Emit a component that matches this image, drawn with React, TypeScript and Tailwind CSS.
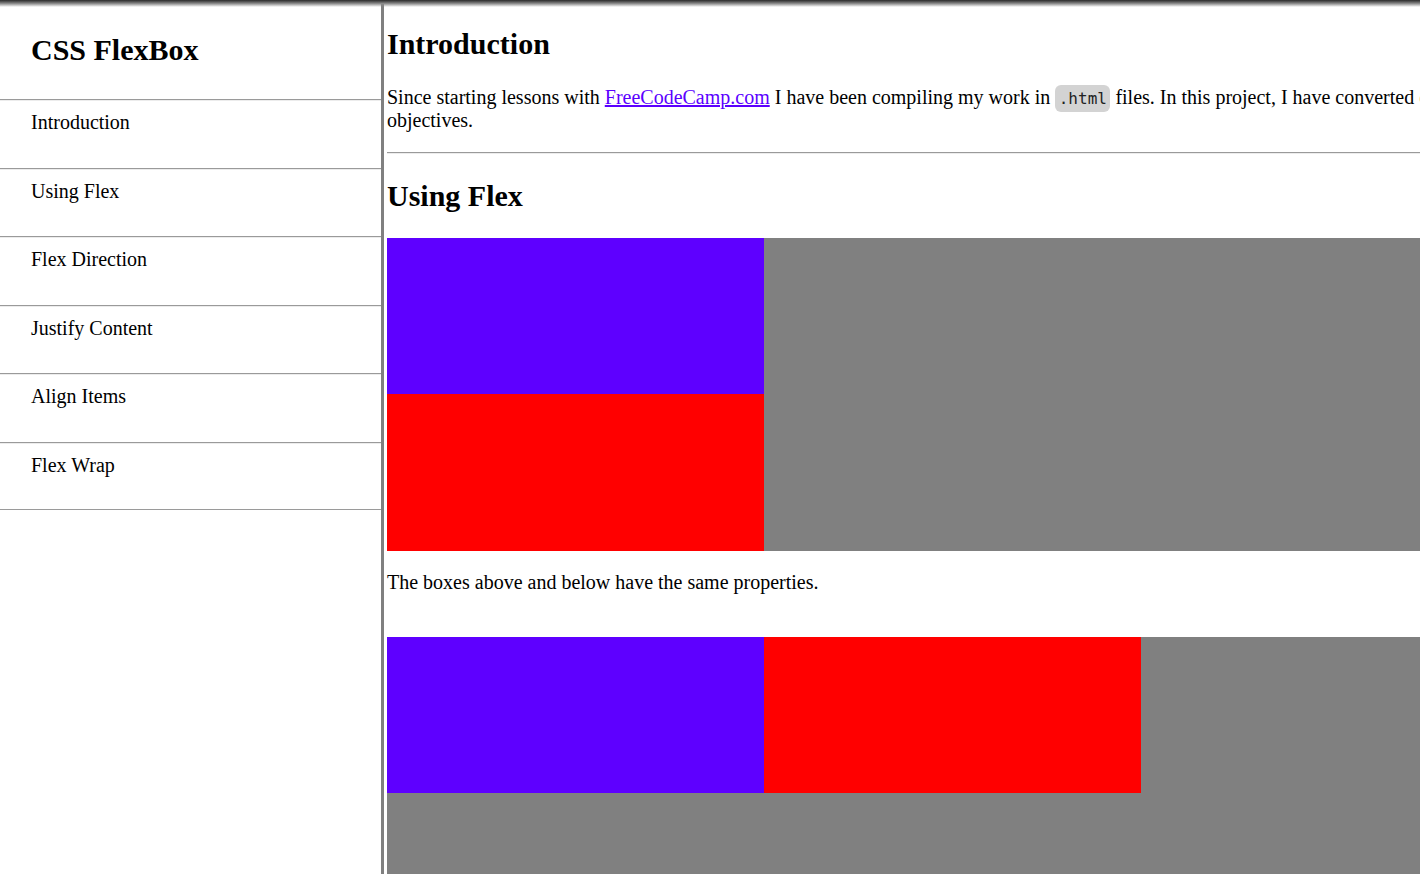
import React from 'react'

const NAV = ['Introduction', 'Using Flex', 'Flex Direction', 'Justify Content', 'Align Items', 'Flex Wrap']

export default function App() {
  return (
    <div
      className="relative flex h-[874px] w-[1420px] overflow-hidden bg-white text-black"
      style={{ fontFamily: '"Liberation Serif", "Times New Roman", serif' }}
    >
      {/* ── Sidebar ── */}
      <nav className="h-full w-[384px] shrink-0 border-r-[3px] border-[#808080]">
        <h1 className="h-[99px] pl-[31px] pt-[33px] text-[30px] font-bold leading-[34px]">CSS FlexBox</h1>
        {NAV.map((item, i) => (
          <a
            key={item}
            href={`#${item.toLowerCase().replace(' ', '-')}`}
            className={`block h-[68.5px] border-t border-[#9a9a9a] pl-[31px] pt-[11px] text-[20px] leading-[23px] text-black no-underline shadow-[inset_0_1px_0_#ececec] ${i === NAV.length - 1 ? 'border-b' : ''}`}
          >
            {item}
          </a>
        ))}
      </nav>

      {/* ── Main ── */}
      <main className="w-[1200px] shrink-0 pl-[3px]">
        <section id="introduction">
          <h2 className="mt-[27px] text-[30px] font-bold leading-[34.5px]">Introduction</h2>
          <p className="mt-[24px] text-[20px] leading-[23px]">
            Since starting lessons with{' '}
            <a href="#" className="text-[#5b00ff] underline">FreeCodeCamp.com</a>{' '}
            I have been compiling my work in{' '}
            <code
              className="rounded-[6px] bg-[#d3d3d3] px-[3.5px] py-[4px] text-[16px] leading-[16px] text-[#222]"
              style={{ fontFamily: '"DejaVu Sans Mono", monospace' }}
            >
              .html
            </code>{' '}
            files. In this project, I have converted one
            <br />
            objectives.
          </p>
          <hr className="mt-[20px] border-t border-b border-t-[#9a9a9a] border-b-[#ececec]" />
        </section>

        <section id="using-flex">
          <h2 className="mt-[25px] text-[30px] font-bold leading-[34.5px]">Using Flex</h2>
          <div className="mt-[25px] flex h-[313px] flex-col bg-[#808080]">
            <div className="h-[156px] w-[377px] bg-[#5e00ff]" />
            <div className="h-[157px] w-[377px] bg-[#ff0000]" />
          </div>
          <p className="mt-[20px] text-[20px] leading-[23px]">The boxes above and below have the same properties.</p>
          <div className="mt-[43px] flex h-[313px] flex-row items-start bg-[#808080]">
            <div className="h-[156px] w-[377px] bg-[#5e00ff]" />
            <div className="h-[156px] w-[377px] bg-[#ff0000]" />
          </div>
        </section>
      </main>

      {/* top shadow */}
      <div className="pointer-events-none absolute inset-x-0 top-0 h-[7px] bg-linear-to-b from-[#2b2b2b] via-[#8a8a8a] to-transparent" />
    </div>
  )
}
